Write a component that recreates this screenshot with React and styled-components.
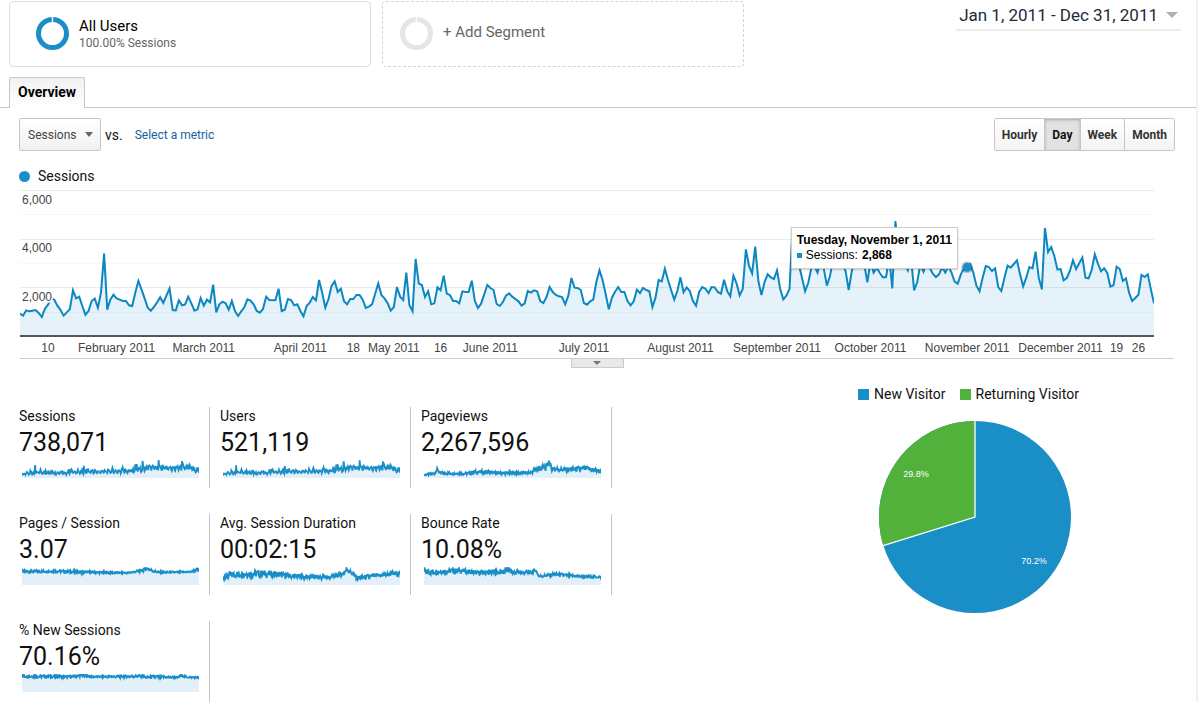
import React from 'react'
import styled, { createGlobalStyle, css } from 'styled-components'

// One reading per day, Jan 1 to Dec 31, in plot units: 30 is the 6,000 line and 468 is zero
const PLOT_TOP = 30
const PLOT_ZERO = 468
const daily = [
    398, 404, 388, 391, 389, 387, 396, 408, 383, 371, 352, 356, 374, 387, 404, 394, 385, 328, 352, 347,
    375, 401, 390, 360, 353, 380, 335, 218, 386, 356, 341, 352, 356, 360, 360, 373, 375, 335, 300, 325,
    352, 380, 389, 378, 364, 349, 366, 344, 322, 387, 388, 358, 373, 370, 347, 367, 389, 385, 351, 374,
    356, 364, 311, 394, 370, 362, 367, 386, 360, 390, 405, 391, 379, 355, 359, 370, 390, 395, 384, 347,
    357, 358, 357, 323, 390, 386, 354, 357, 373, 370, 390, 406, 375, 365, 348, 358, 297, 335, 380, 355,
    315, 301, 333, 323, 361, 370, 354, 354, 342, 342, 356, 381, 377, 370, 338, 307, 342, 352, 366, 389,
    378, 318, 347, 357, 275, 373, 391, 234, 308, 312, 348, 331, 370, 367, 319, 328, 284, 338, 342, 360,
    360, 367, 331, 333, 333, 299, 360, 381, 368, 340, 312, 321, 327, 369, 375, 363, 344, 337, 347, 354,
    361, 374, 367, 330, 335, 328, 331, 360, 366, 348, 318, 333, 342, 346, 348, 370, 344, 291, 320, 321,
    327, 366, 371, 361, 356, 303, 268, 297, 340, 385, 350, 332, 318, 333, 333, 360, 373, 361, 326, 336,
    321, 327, 331, 378, 350, 297, 301, 263, 297, 327, 356, 330, 289, 334, 319, 330, 360, 374, 333, 318,
    323, 336, 318, 319, 333, 338, 296, 330, 346, 284, 307, 343, 324, 205, 255, 277, 197, 300, 342, 303,
    280, 289, 294, 268, 323, 355, 344, 324, 140, 200, 250, 290, 331, 306, 262, 255, 275, 240, 262, 314,
    285, 235, 225, 240, 250, 270, 327, 270, 235, 225, 240, 250, 304, 240, 275, 260, 276, 289, 288, 230,
    322, 120, 220, 235, 250, 268, 230, 328, 303, 250, 272, 245, 260, 278, 288, 280, 258, 275, 256, 275,
    302, 308, 280, 262, 259, 250, 275, 314, 331, 290, 255, 258, 270, 262, 318, 330, 290, 254, 260, 249,
    238, 280, 316, 290, 258, 262, 212, 290, 325, 141, 213, 198, 225, 266, 264, 298, 291, 270, 238, 264,
    247, 230, 290, 292, 267, 220, 248, 271, 262, 276, 317, 313, 257, 264, 300, 292, 335, 360, 351, 341,
    282, 288, 280, 325, 367,
]
const LAST_DAY = daily.length - 1
const SELECTED_DAY = 304

const xTicks = [
    [9, '10'], [31, 'February 2011'], [59, 'March 2011'], [90, 'April 2011'], [107, '18'],
    [120, 'May 2011'], [135, '16'], [151, 'June 2011'], [181, 'July 2011'], [212, 'August 2011'],
    [243, 'September 2011'], [273, 'October 2011'], [304, 'November 2011'], [334, 'December 2011'],
    [352, '19'], [359, '26'],
]

const sessionHeights = daily.map((y) => (PLOT_ZERO - y) / 6.7)

// Daily heights (0-52) that follow a list of [part of year, level, spread] stops
const trend = (stops, seed) =>
    daily.map((_, i) => {
        const t = i / LAST_DAY
        const next = Math.max(1, stops.findIndex((s) => s[0] >= t))
        const [t0, v0, n0] = stops[next - 1]
        const [t1, v1, n1] = stops[next]
        const k = (t - t0) / (t1 - t0)
        const raw = Math.sin((i + seed) * 12.9898) * 43758.5453
        const noise = (raw - Math.floor(raw)) * 2 - 1
        return v0 + (v1 - v0) * k + noise * (n0 + (n1 - n0) * k)
    })

const metrics = [
    { label: 'Sessions', value: '738,071', data: sessionHeights },
    { label: 'Users', value: '521,119', data: sessionHeights.map((v) => v * 0.96 + 1) },
    {
        label: 'Pageviews',
        value: '2,267,596',
        data: trend([[0, 9, 2], [0.06, 13, 4], [0.074, 26, 3], [0.09, 14, 4], [0.25, 13, 4], [0.28, 17, 6],
            [0.36, 17, 6], [0.4, 14, 4], [0.6, 15, 4], [0.65, 28, 10], [0.69, 30, 10], [0.705, 48, 4],
            [0.72, 28, 8], [0.78, 24, 6], [0.92, 27, 8], [1, 19, 7]], 3),
    },
    {
        label: 'Pages / Session',
        value: '3.07',
        data: trend([[0, 39, 4], [0.2, 40, 4], [0.35, 37, 4], [0.6, 35, 2], [0.68, 42, 4], [0.705, 48, 4],
            [0.74, 41, 4], [0.78, 36, 3], [0.95, 38, 2], [1, 45, 4]], 11),
    },
    {
        label: 'Avg. Session Duration',
        value: '00:02:15',
        data: trend([[0, 25, 9], [0.1, 32, 11], [0.2, 33, 11], [0.3, 31, 9], [0.4, 25, 7], [0.6, 22, 6],
            [0.68, 33, 7], [0.7, 46, 6], [0.76, 20, 7], [0.9, 29, 6], [1, 34, 8]], 23),
    },
    {
        label: 'Bounce Rate',
        value: '10.08%',
        data: trend([[0, 46, 6], [0.01, 37, 9], [0.2, 42, 7], [0.3, 35, 6], [0.45, 38, 9], [0.48, 44, 8],
            [0.5, 36, 7], [0.61, 36, 5], [0.63, 44, 4], [0.65, 25, 4], [0.74, 31, 5], [0.9, 24, 3], [1, 23, 3]], 37),
    },
    {
        label: '% New Sessions',
        value: '70.16%',
        data: trend([[0, 46, 5], [0.28, 44, 3], [0.34, 48, 4], [0.4, 44, 2], [0.6, 45, 4], [0.68, 46, 4],
            [0.7, 42, 3], [0.75, 44, 5], [0.88, 42, 2], [0.9, 48, 3], [0.93, 43, 2], [1, 42, 3]], 51),
    },
]

const linePath = (ys) => 'M' + ys.map((y, i) => `${i} ${y}`).join('L')

function Donut({ color }) {
    return (
        <svg width="33" height="33" viewBox="0 0 33 33" aria-hidden="true">
            <circle cx="16.5" cy="16.5" r="14" fill="none" stroke={color} strokeWidth="5" />
            <path d="M16.5 0V6" stroke="#fff" strokeWidth="1.4" />
        </svg>
    )
}

function Caret({ width, height, color }) {
    return (
        <svg width={width} height={height} viewBox="0 0 10 5" preserveAspectRatio="none" aria-hidden="true">
            <path d="M0 0H10L5 5Z" fill={color} />
        </svg>
    )
}

function SessionsChart() {
    const line = linePath(daily)
    const pointX = `${(SELECTED_DAY / LAST_DAY) * 100}%`
    const pointY = 1 + (daily[SELECTED_DAY] - PLOT_TOP) / 3
    return (
        <Chart>
            <ChartSvg role="img" aria-label="Sessions per day in 2011">
                <svg y="1" width="100%" height="146" viewBox={`0 ${PLOT_TOP} ${LAST_DAY} 438`} preserveAspectRatio="none">
                    <path d={`${line}L${LAST_DAY} 463L0 463Z`} fill="#e6f2f9" />
                </svg>
                {[0, 49, 97].map((y) => <rect key={y} y={y} width="100%" height="1" fill="#000" fillOpacity=".08" />)}
                {[24, 73, 122].map((y) => <rect key={y} y={y} width="100%" height="1" fill="#000" fillOpacity=".03" />)}
                <svg y="1" width="100%" height="146" viewBox={`0 ${PLOT_TOP} ${LAST_DAY} 438`} preserveAspectRatio="none">
                    <path d={line} fill="none" stroke="#0b87c1" strokeWidth="2" vectorEffect="non-scaling-stroke" />
                </svg>
                <rect y="145" width="100%" height="2" fill="#555" />
                <circle cx={pointX} cy={pointY} r="6" fill="#000" fillOpacity=".2" />
                <circle cx={pointX} cy={pointY} r="4.5" fill="#1a8ec7" />
                <AxisText x="2" y="14">6,000</AxisText>
                <AxisText x="2" y="62">4,000</AxisText>
                <AxisText x="2" y="111">2,000</AxisText>
                {xTicks.map(([day, label]) => (
                    <AxisText key={label} x={`${(day / LAST_DAY) * 100}%`} y="162" textAnchor="middle">{label}</AxisText>
                ))}
            </ChartSvg>
            <Tooltip role="tooltip">
                <strong>Tuesday, November 1, 2011</strong>
                <TooltipRow><Swatch $size={5} $color="#1a8ec7" />Sessions: <strong>2,868</strong></TooltipRow>
            </Tooltip>
        </Chart>
    )
}

function Metric({ label, value, data }) {
    const line = linePath(data.map((v) => 52 - v))
    return (
        <MetricCell>
            <MetricLabel>{label}</MetricLabel>
            <MetricValue>{value}</MetricValue>
            <Spark viewBox={`0 0 ${LAST_DAY} 52`} preserveAspectRatio="none" aria-hidden="true">
                <path d={`${line}L${LAST_DAY} 52L0 52Z`} fill="#e3f0f9" />
                <path d={line} fill="none" stroke="#1a8ec7" strokeWidth="1.8" vectorEffect="non-scaling-stroke" />
            </Spark>
        </MetricCell>
    )
}

function VisitorPie() {
    return (
        <PiePanel>
            <PieLegend>
                <PieKey><Swatch $size={11} $color="#1a8ec7" />New Visitor</PieKey>
                <PieKey><Swatch $size={11} $color="#52b13a" />Returning Visitor</PieKey>
            </PieLegend>
            <PieSvg viewBox="-97 -97 194 194" role="img" aria-label="New Visitor 70.2%, Returning Visitor 29.8%">
                <circle r="96" fill="#1a8ec7" />
                <path d="M0 0L-91.7 28.5A96 96 0 0 1 0 -96Z" fill="#52b13a" />
                <path d="M0 -97V0L-92.6 28.9" fill="none" stroke="#fff" strokeWidth="1.3" />
                <text x="-59" y="-40">29.8%</text>
                <text x="59" y="47">70.2%</text>
            </PieSvg>
        </PiePanel>
    )
}

function App() {
    const [scale, setScale] = React.useState('Day')

    return (
        <Page>
            <GlobalStyle />
            <Header>
                <Segment>
                    <Donut color="#1a8ec7" />
                    <div>
                        <SegmentName>All Users</SegmentName>
                        <SegmentShare>100.00% Sessions</SegmentShare>
                    </div>
                </Segment>
                <AddSegment type="button">
                    <Donut color="#e5e5e5" />
                    <span>+ Add Segment</span>
                </AddSegment>
                <DateRange type="button">
                    Jan 1, 2011 - Dec 31, 2011
                    <Caret width={12} height={6} color="#b0b0b0" />
                </DateRange>
            </Header>

            <Tabs role="tablist">
                <Tab type="button" role="tab" aria-selected="true">Overview</Tab>
            </Tabs>

            <Controls>
                <SelectBox>
                    <select aria-label="Metric" defaultValue="Sessions">
                        {metrics.map((m) => <option key={m.label}>{m.label}</option>)}
                    </select>
                    <Caret width={8} height={5} color="#666" />
                </SelectBox>
                <Versus>vs.</Versus>
                <MetricLink href="#metric">Select a metric</MetricLink>
                <ScaleGroup>
                    {['Hourly', 'Day', 'Week', 'Month'].map((name) => (
                        <ScaleButton key={name} type="button" $active={scale === name} onClick={() => setScale(name)}>
                            {name}
                        </ScaleButton>
                    ))}
                </ScaleGroup>
            </Controls>

            <ChartLegend><Dot />Sessions</ChartLegend>
            <SessionsChart />
            <Divider>
                <Handle type="button" aria-label="Annotations">
                    <Caret width={8} height={4} color="#777" />
                </Handle>
            </Divider>

            <Summary>
                <Metrics>
                    {metrics.map((m) => <Metric key={m.label} {...m} />)}
                </Metrics>
                <VisitorPie />
            </Summary>
        </Page>
    )
}

const GlobalStyle = createGlobalStyle`
    *{
        box-sizing: border-box;
    }
    body{
        margin: 0;
        background-color: #fff;
        color: #111;
        font-family: Roboto, "Liberation Sans", sans-serif;
    }
    button, select{
        font-family: inherit;
        cursor: pointer;
    }
    svg{
        display: block;
        flex-shrink: 0;
    }
`

const Page = styled.main`
    min-height: 100vh;
    margin-right: 2px;
    padding-top: 1px;
    border-right: 2px solid #f1f1f1;
`

const Header = styled.header`
    display: flex;
    align-items: flex-start;
    gap: 11px;
    padding: 0 15px 0 9px;
`

const segmentBox = css`
    display: flex;
    flex: 0 1 362px;
    height: 66px;
    border-radius: 4px;
    text-align: left;
`

const Segment = styled.section`
    ${segmentBox}
    align-items: flex-start;
    gap: 10px;
    padding: 15px 26px;
    border: 1px solid #dedede;
`

const SegmentName = styled.div`
    color: #000;
    font-size: 15px;
    line-height: 18px;
`

const SegmentShare = styled.div`
    color: #666;
    font-size: 12px;
    line-height: 16px;
`

const AddSegment = styled.button`
    ${segmentBox}
    gap: 10px;
    align-items: flex-start;
    padding: 15px 17px;
    border: 1px dashed #d4d4d4;
    background: none;
    color: #666;
    font-size: 15px;
    line-height: 30px;
`

const DateRange = styled.button`
    display: flex;
    align-items: center;
    gap: 8px;
    height: 30px;
    margin-left: auto;
    padding: 0 3px;
    border: 0;
    border-bottom: 2px solid #ececec;
    background: none;
    color: #1b2b3a;
    font-size: 17px;
    white-space: nowrap;
`

const Tabs = styled.div`
    display: flex;
    height: 31px;
    margin-top: 10px;
    padding-left: 9px;
    border-bottom: 1px solid #c8c8c8;
`

const Tab = styled.button`
    height: 31px;
    padding: 0 8px 2px;
    border: 1px solid #c8c8c8;
    border-bottom: 0;
    border-radius: 2px 2px 0 0;
    background: linear-gradient(#f1f1f1, #fff);
    font-size: 14px;
    font-weight: 700;
`

const Controls = styled.div`
    display: flex;
    align-items: center;
    margin-top: 10px;
    padding: 0 21px 0 19px;
`

const SelectBox = styled.div`
    position: relative;
    select{
        appearance: none;
        width: 82px;
        height: 33px;
        padding: 0 8px;
        border: 1px solid #c6c6c6;
        border-radius: 2px;
        background: linear-gradient(#fff, #f1f1f1);
        color: #444;
        font-size: 12px;
    }
    svg{
        position: absolute;
        top: 14px;
        right: 8px;
        pointer-events: none;
    }
`

const Versus = styled.span`
    margin-left: 4px;
    font-size: 14px;
`

const MetricLink = styled.a`
    margin-left: 12px;
    color: #15629e;
    font-size: 12px;
    text-decoration: none;
`

const ScaleGroup = styled.div`
    display: flex;
    margin-left: auto;
    border: 1px solid #c6c6c6;
    border-radius: 2px;
`

const ScaleButton = styled.button`
    height: 31px;
    padding: 0 7px;
    border: 0;
    background: linear-gradient(#fff, #f3f3f3);
    color: #333;
    font-size: 12px;
    font-weight: 700;
    & + &{
        border-left: 1px solid #c6c6c6;
    }
    ${({ $active }) => $active && css`
        background: #e2e2e2;
        box-shadow: inset 0 1px 3px rgba(0, 0, 0, .25);
        color: #111;
    `}
`

const ChartLegend = styled.div`
    display: flex;
    align-items: center;
    gap: 8px;
    margin-top: 15px;
    padding-left: 19px;
    font-size: 14px;
    line-height: 20px;
`

const Dot = styled.i`
    width: 11px;
    height: 11px;
    border-radius: 50%;
    background-color: #1a8ec7;
`

const Chart = styled.div`
    position: relative;
    margin: 4px 42px 0 20px;
`

const ChartSvg = styled.svg`
    width: 100%;
    height: 168px;
`

const AxisText = styled.text`
    fill: #444;
    stroke: #fff;
    stroke-width: 3px;
    paint-order: stroke;
    font-family: "Liberation Sans", Arial, sans-serif;
    font-size: 12px;
`

const Tooltip = styled.div`
    position: absolute;
    top: 37px;
    right: 17.3%;
    padding: 5px;
    border: 1px solid #ccc;
    background-color: #fff;
    box-shadow: 0 1px 2px rgba(0, 0, 0, .2);
    color: #000;
    font-family: "Liberation Sans", Arial, sans-serif;
    font-size: 12px;
    line-height: 15px;
    white-space: nowrap;
`

const TooltipRow = styled.div`
    display: flex;
    align-items: center;
    gap: 4px;
`

const Swatch = styled.i`
    width: ${({ $size }) => $size}px;
    height: ${({ $size }) => $size}px;
    background-color: ${({ $color }) => $color};
`

const Divider = styled.div`
    display: flex;
    justify-content: center;
    height: 10px;
    margin: 0 22px 0 20px;
    border-top: 1px solid #ccc;
`

const Handle = styled.button`
    display: flex;
    align-items: center;
    justify-content: center;
    width: 53px;
    height: 9px;
    padding: 0;
    border: 1px solid #ccc;
    border-top: 0;
    background-color: #e9e9e9;
`

const Summary = styled.div`
    display: flex;
    justify-content: space-between;
    padding: 0 101px 0 19px;
`

const Metrics = styled.div`
    display: grid;
    grid-template-columns: repeat(3, 191px);
    gap: 26px 10px;
    margin-top: 39px;
`

const MetricCell = styled.section`
    height: 81px;
    border-right: 1px solid #c4c4c4;
`

const MetricLabel = styled.div`
    font-size: 14px;
    line-height: 18px;
`

const MetricValue = styled.div`
    font-size: 25px;
    line-height: 35px;
`

const Spark = styled.svg`
    width: 177px;
    height: 18px;
    margin-left: 3px;
`

const PiePanel = styled.section`
    width: 240px;
    margin-top: 16px;
`

const PieLegend = styled.div`
    display: flex;
    gap: 14px;
    padding-left: 3px;
    font-size: 14px;
    line-height: 20px;
    white-space: nowrap;
`

const PieKey = styled.span`
    display: flex;
    align-items: center;
    gap: 5px;
`

const PieSvg = styled.svg`
    width: 194px;
    height: 194px;
    margin: 16px auto 0;
    text{
        fill: #fff;
        font-family: "Liberation Sans", Arial, sans-serif;
        font-size: 9px;
        text-anchor: middle;
    }
`

export default App
